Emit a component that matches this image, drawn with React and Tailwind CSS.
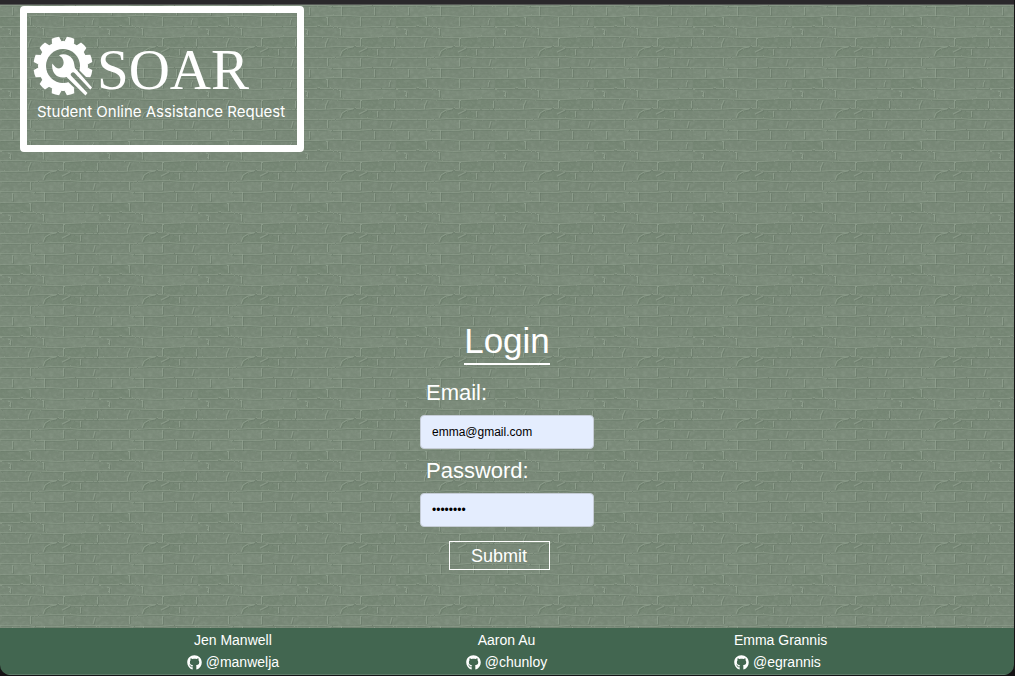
import { FaGithub } from "react-icons/fa";

const TEAM = [
  { name: "Jen Manwell", handle: "manwelja" },
  { name: "Aaron Au", handle: "chunloy" },
  { name: "Emma Grannis", handle: "egrannis" },
];

const JOINTS =
  "M0 0.5H28L34 1.5H62L70 0.5H99M0 11.5H22L34 10.5H52L64 11.5H99M0 21.5H40L58 22.5L76 21.5H99M0 31.5H30L46 32.5H70L84 31.5H99M0 42.5H24L38 41.5H60L74 42.5H99M0 52.5H38L50 51.5H72L80 52.5H99";
const ENDS =
  "M12.5 2V10M44.5 1V11M77.5 2V10M30.5 12V20M63.5 12V21M93 13L92 20M8 24L10.5 25V30M43.5 23V30M31 33L28.5 39V42M63.5 33V41M97.5 33V41M43 51L45 46L50 43L56 42M62 47L70 43M80.5 44V50M30.5 53V60M63.5 53V61M95 54L93 61";

function BrickWall() {
  return (
    <svg aria-hidden="true" className="absolute inset-0 -z-10 h-full w-full">
      <defs>
        <filter id="grain" x="0" y="0" width="100%" height="100%">
          <feTurbulence type="fractalNoise" baseFrequency="0.22 0.3" numOctaves="3" seed="4" stitchTiles="stitch" />
          <feColorMatrix values="0 0 0 0 0.9  0 0 0 0 0.95  0 0 0 0 0.9  0.9 0 0 0 -0.35" />
        </filter>
        <filter id="rough" x="-5%" y="-5%" width="110%" height="110%" colorInterpolationFilters="sRGB">
          <feTurbulence type="fractalNoise" baseFrequency="0.25" numOctaves="2" seed="7" />
          <feDisplacementMap in="SourceGraphic" scale="2" xChannelSelector="R" yChannelSelector="G" />
        </filter>
        <pattern id="bricks" width="99" height="62" patternUnits="userSpaceOnUse">
          <rect width="99" height="62" fill="#778776" />
          <path d="M0 1H44V11H0ZM43 22H99V31H43ZM30 53H64V62H30Z" fill="#7a8a79" />
          <path d="M0 12H31V21H0ZM63 33H97V42H63ZM44 43H80V52H44Z" fill="#748573" />
          <rect width="99" height="62" filter="url(#grain)" opacity="0.16" />
          <g fill="none" filter="url(#rough)">
            <g stroke="#667766" transform="translate(1 1)">
              <path d={JOINTS} strokeOpacity="0.4" />
              <path d={ENDS} strokeOpacity="0.55" />
            </g>
            <g stroke="#92a190">
              <path d={JOINTS} strokeOpacity="0.5" />
              <path d={ENDS} strokeOpacity="0.75" />
            </g>
          </g>
        </pattern>
      </defs>
      <rect width="100%" height="100%" fill="url(#bricks)" />
    </svg>
  );
}

function GearMark() {
  const teeth = Array.from({ length: 12 }, (_, i) => 15 + i * 30);
  return (
    <svg aria-hidden="true" viewBox="0 0 60 60" className="mt-[3px] h-15 w-15 shrink-0">
      <defs>
        <mask id="gear-cut">
          <rect width="60" height="60" fill="#fff" />
          <circle cx="30" cy="30" r="17" fill="#000" />
          <path d="M31 42L43 31L64 52L53 63Z" fill="#000" />
        </mask>
        <mask id="handle-cut">
          <rect width="60" height="60" fill="#fff" />
          <path d="M40 38.5L58 57.5" stroke="#000" strokeWidth="4.4" strokeLinecap="round" />
        </mask>
      </defs>
      <g fill="#fff">
        <g mask="url(#gear-cut)">
          <circle cx="30" cy="30" r="25" />
          {teeth.map((angle) => (
            <path key={angle} d="M25 6L26.2 0.7Q30 0 33.8 0.7L35 6Z" transform={`rotate(${angle} 30 30)`} />
          ))}
        </g>
        <g mask="url(#handle-cut)">
          <path d="M26 19.2C30.5 17 36.5 18.6 39.6 23.2C41.4 26 41.2 29.4 42 32L59 51.5L52.5 59.5L33.5 41C30.5 41.9 27.5 41.6 25 40.4C21 38.4 18.6 34 19.2 27.4L22.6 31.2Q26 33.4 28.4 31.6Q31.6 28.6 30.4 24.8Q29.6 21.4 26 19.2Z" />
        </g>
      </g>
    </svg>
  );
}

function Logo() {
  return (
    <a
      href="#home"
      aria-label="SOAR home"
      className="ml-5 mt-px flex h-[146px] w-71 flex-col self-start rounded border-[7px] border-white pl-[6px] pt-5 text-white"
    >
      <span className="flex items-start gap-1">
        <GearMark />
        <span className="pt-1 font-['Liberation_Serif',serif] text-[57px] leading-[66px]">SOAR</span>
      </span>
      <span className="whitespace-nowrap pl-1 font-['Inter',sans-serif] text-[15px] leading-[18px]">
        Student Online Assistance Request
      </span>
    </a>
  );
}

const field =
  "h-[34px] w-[174px] rounded border border-[#c5ccd6] bg-[#e4edfe] px-[11px] text-xs text-black outline-none";
const label = "pl-[6px] text-[22px] leading-8";

function LoginForm() {
  return (
    <form
      onSubmit={(event) => event.preventDefault()}
      className="mx-auto mb-[58px] mt-auto flex flex-col text-white"
    >
      <h1 className="mb-3 self-center border-b-2 border-white text-[35px] leading-[44px]">Login</h1>
      <div className="flex flex-col gap-[6px]">
        <label htmlFor="email" className={label}>Email:</label>
        <input id="email" type="email" defaultValue="emma@gmail.com" className={field} />
        <label htmlFor="password" className={label}>Password:</label>
        <input id="password" type="password" defaultValue="password" className={field} />
      </div>
      <button type="submit" className="mr-4 mt-[14px] h-[29px] w-[101px] self-center border border-white text-lg leading-6">
        Submit
      </button>
    </form>
  );
}

export default function App() {
  return (
    <div className="flex min-h-screen flex-col bg-[#151315] pb-px pr-px font-['Liberation_Sans',Arial,sans-serif]">
      <div className="h-1 bg-[#2a282b]" />
      <div className="flex grow flex-col overflow-hidden rounded-b-[10px] border-t border-[#555855]">
        <main className="relative isolate flex grow flex-col">
          <BrickWall />
          <Logo />
          <LoginForm />
        </main>
        <footer className="flex justify-evenly border-b border-[#5d7c69] bg-[#426650] pb-px pt-px text-sm leading-[22px] text-white">
          {TEAM.map(({ name, handle }) => (
            <div key={handle} className="flex flex-col items-center last:items-start">
              <span>{name}</span>
              <a href={`https://github.com/${handle}`} className="flex items-center gap-1">
                <FaGithub className="size-[15px]" />@{handle}
              </a>
            </div>
          ))}
        </footer>
      </div>
    </div>
  );
}
